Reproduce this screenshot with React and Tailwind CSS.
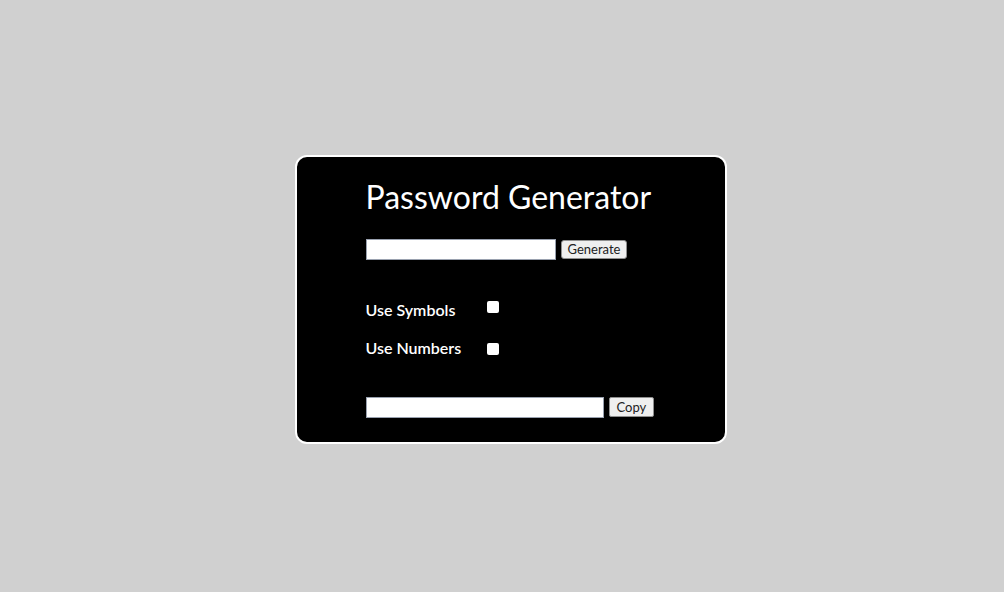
export default function App() {
  return (
    <div className="flex h-[592px] w-full items-center justify-center bg-[#d0d0d0] pl-[17px] pt-[6px]">
      <div
        className="flex h-[289px] w-[432px] flex-col rounded-xl border-2 border-white bg-black pl-[69px] pt-[20px] text-white"
        style={{ fontFamily: "Lato, 'Open Sans', sans-serif" }}
      >
        <h1 className="text-[32px] leading-[40px] font-normal">Password Generator</h1>

        <div className="mt-[22px] flex items-center gap-[5px]">
          <input type="text" className="h-[21px] w-[190px] border border-gray-400 bg-white" />
          <button className="h-[19px] rounded-[3px] border border-[#8f8f8f] bg-[#efefef] px-[6px] text-[13px] leading-none text-[#222]">
            Generate
          </button>
        </div>

        <div className="mt-[38px] flex items-center">
          <span className="w-[121px] text-[16px] font-semibold">Use Symbols</span>
          <input type="checkbox" className="mb-[5px] h-[12px] w-[12px] appearance-none rounded-[2px] bg-white" />
        </div>

        <div className="mt-[14px] flex items-center">
          <span className="w-[121px] text-[16px] font-semibold">Use Numbers</span>
          <input type="checkbox" className="mt-[3px] h-[12px] w-[12px] appearance-none rounded-[2px] bg-white" />
        </div>

        <div className="mt-[37px] flex items-center gap-[5px]">
          <input type="text" className="h-[21px] w-[238px] border border-gray-400 bg-white" />
          <button className="h-[20px] rounded-[2px] border border-[#8f8f8f] bg-[#efefef] px-[7px] text-[13px] leading-none text-[#222]">
            Copy
          </button>
        </div>
      </div>
    </div>
  );
}
